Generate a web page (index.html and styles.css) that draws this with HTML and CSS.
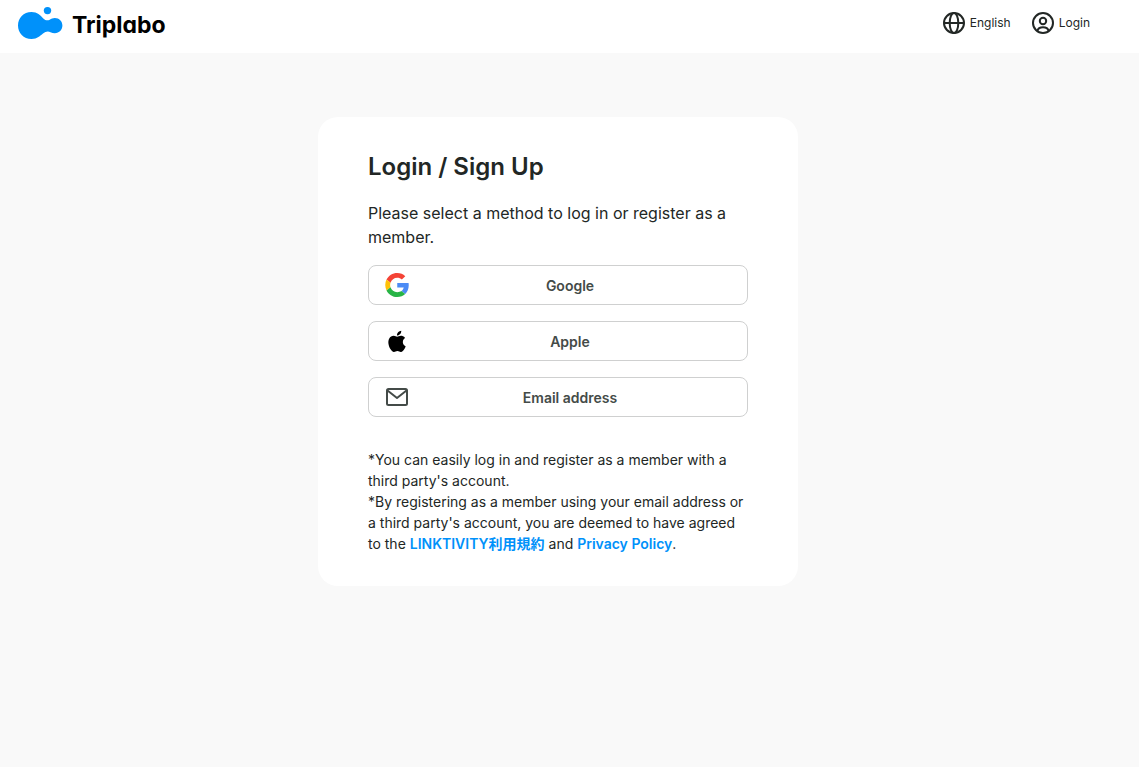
FILE: index.html
```html
<!DOCTYPE html>
<html lang="en">
<head>
    <meta charset="UTF-8">
    <meta name="viewport" content="width=device-width, initial-scale=1.0">
    <title>Login / Sign Up - Triplabo</title>
    <link rel="stylesheet" href="styles.css">
</head>
<body>
    <header class="header">
        <a class="logo" href="#">
            <svg width="46" height="34" viewBox="0 0 46 34" fill="#0091fa" aria-hidden="true">
                <circle cx="30.5" cy="4.6" r="3.7"/>
                <path d="M14.5 6C6.500 6 1 12 1 19.500S6.500 33 14.500 33C20.500 33 23 30 26 27.600C28.500 25.500 31 25 33.500 26.200C35 26.900 36.200 27.200 37.800 27.200C42.300 27.200 45.400 23.900 45.400 19.600S42.300 12 37.800 12C35.800 12 34.300 12.800 32.700 13.700C30.500 14.900 28.300 14.400 26.300 12.400C23.200 9.300 20.500 6 14.500 6Z"/>
            </svg>
            <span class="logo-text">Triplabo</span>
        </a>
        <nav class="nav">
            <button type="button" class="nav-item">
                <svg width="24" height="24" viewBox="0 0 24 24" fill="none" stroke="#222725" stroke-width="2" aria-hidden="true">
                    <circle cx="12" cy="12" r="10"/>
                    <ellipse cx="12" cy="12" rx="4.300" ry="10"/>
                    <path d="M2 12h20"/>
                </svg>
                English
            </button>
            <a class="nav-item" href="#">
                <svg width="24" height="24" viewBox="0 0 24 24" fill="none" stroke="#222725" stroke-width="2" aria-hidden="true">
                    <circle cx="12" cy="12" r="10"/>
                    <circle cx="12" cy="10" r="3.200"/>
                    <path d="M6.300 20c.7-2.600 2.900-3.700 5.700-3.700s5 1.100 5.700 3.700"/>
                </svg>
                Login
            </a>
        </nav>
    </header>
    <main class="main">
        <section class="card">
            <h1>Login / Sign Up</h1>
            <p class="lead">Please select a method to log in or register as a member.</p>
            <div class="methods">
                <button type="button" class="method">
                    <svg width="24" height="24" viewBox="0 0 47 48" aria-hidden="true">
                        <path fill="#f44336" d="M24 9.500c3.540 0 6.710 1.220 9.210 3.600l6.850-6.850C35.900 2.380 30.470 0 24 0 14.620 0 6.510 5.380 2.560 13.220l7.980 6.190C12.430 13.720 17.740 9.500 24 9.500z"/>
                        <path fill="#4c8bf5" d="M46.980 24.550c0-1.570-.15-3.090-.38-4.550H24v9.020h12.940c-.58 2.960-2.260 5.480-4.780 7.180l7.730 6c4.510-4.180 7.090-10.360 7.090-17.650z"/>
                        <path fill="#ffc107" d="M10.530 28.590c-.48-1.450-.76-2.990-.76-4.590s.27-3.140.76-4.590l-7.980-6.190C.92 16.460 0 20.120 0 24s.92 7.540 2.560 10.780l7.970-6.190z"/>
                        <path fill="#28b446" d="M24 48c6.480 0 11.930-2.130 15.890-5.810l-7.730-6c-2.150 1.450-4.920 2.300-8.160 2.300-6.260 0-11.570-4.220-13.470-9.910l-7.980 6.190C6.510 42.620 14.620 48 24 48z"/>
                    </svg>
                    <span>Google</span>
                </button>
                <button type="button" class="method">
                    <svg width="24" height="24" viewBox="2.200 1.500 20.600 20.600" fill="#000" aria-hidden="true">
                        <path d="M17.500 12.630c-.03-2.310 1.890-3.420 1.970-3.470-1.070-1.570-2.740-1.780-3.340-1.810-1.420-.14-2.770.84-3.490.84s-1.830-.82-3.010-.79c-1.550.02-2.980.9-3.780 2.280-1.610 2.800-.41 6.930 1.160 9.200.77 1.110 1.680 2.350 2.880 2.310 1.160-.05 1.590-.75 2.990-.75s1.790.75 3.010.72c1.250-.02 2.030-1.130 2.800-2.250.88-1.290 1.240-2.540 1.260-2.600-.03-.01-2.420-.93-2.450-3.680z"/>
                        <path d="M15.200 5.870c.64-.77 1.070-1.850.95-2.920-.92.040-2.030.61-2.690 1.380-.59.69-1.110 1.780-.97 2.830 1.020.080 2.070-.52 2.710-1.290z"/>
                    </svg>
                    <span>Apple</span>
                </button>
                <button type="button" class="method">
                    <svg width="24" height="24" viewBox="0 0 24 24" fill="none" stroke="#444b48" stroke-width="2" stroke-linejoin="round" aria-hidden="true">
                        <rect x="2" y="4" width="20" height="16" rx="1.500"/>
                        <path d="M2.500 5.500L12 13l9.500-7.500"/>
                    </svg>
                    <span>Email address</span>
                </button>
            </div>
            <p class="notes">
                *You can easily log in and register as a member with a third party's account.<br>
                *By registering as a member using your email address or a third party's account, you are deemed to have agreed to the <a href="#">LINKTIVITY利用規約</a> and <a href="#">Privacy Policy</a>.
            </p>
        </section>
    </main>
</body>
</html>
```
FILE: styles.css
```css
* {
    box-sizing: border-box;
}
body {
    margin: 0;
    background-color: #f9f9f9;
    color: #222725;
    font-family: Inter, "Noto Sans CJK JP", sans-serif;
}
h1, p {
    margin: 0;
}
button {
    font-family: inherit;
    cursor: pointer;
}
.header {
    display: flex;
    justify-content: space-between;
    align-items: flex-start;
    height: 53px;
    padding: 6px 49px 0 17px;
    background: #fff;
}
.logo {
    display: flex;
    align-items: flex-start;
    gap: 9px;
    color: #000;
    text-decoration: none;
}
/* single-storey "a" */
.logo-text {
    font-size: 23px;
    font-weight: 700;
    line-height: 38px;
    font-feature-settings: "cv11";
}
.nav {
    display: flex;
    gap: 20px;
    padding-top: 5px;
}
.nav-item {
    display: flex;
    align-items: center;
    gap: 4px;
    padding: 0;
    border: none;
    background: none;
    color: #222725;
    font-size: 12px;
    line-height: 24px;
    text-decoration: none;
}
.main {
    display: flex;
    justify-content: center;
    padding: 64px 23px 64px 0;
}
.card {
    width: 100%;
    max-width: 480px;
    padding: 32px 50px;
    border-radius: 20px;
    background: #fff;
}
h1 {
    margin-bottom: 16px;
    font-size: 24px;
    font-weight: 600;
    line-height: 36px;
}
.lead {
    margin-bottom: 16px;
    font-size: 16px;
    line-height: 24px;
}
.methods {
    display: flex;
    flex-direction: column;
    gap: 16px;
    margin-bottom: 32px;
}
.method {
    display: flex;
    align-items: center;
    width: 100%;
    height: 40px;
    padding: 0 16px;
    border: 1px solid #cfd0d0;
    border-radius: 8px;
    background: #fff;
    color: #444b48;
    font-size: 14px;
    font-weight: 600;
}
.method span {
    flex: 1;
    text-align: center;
}
.notes {
    font-size: 14px;
    line-height: 21px;
}
.notes a {
    color: #0091fa;
    font-weight: 600;
    text-decoration: none;
}
```
